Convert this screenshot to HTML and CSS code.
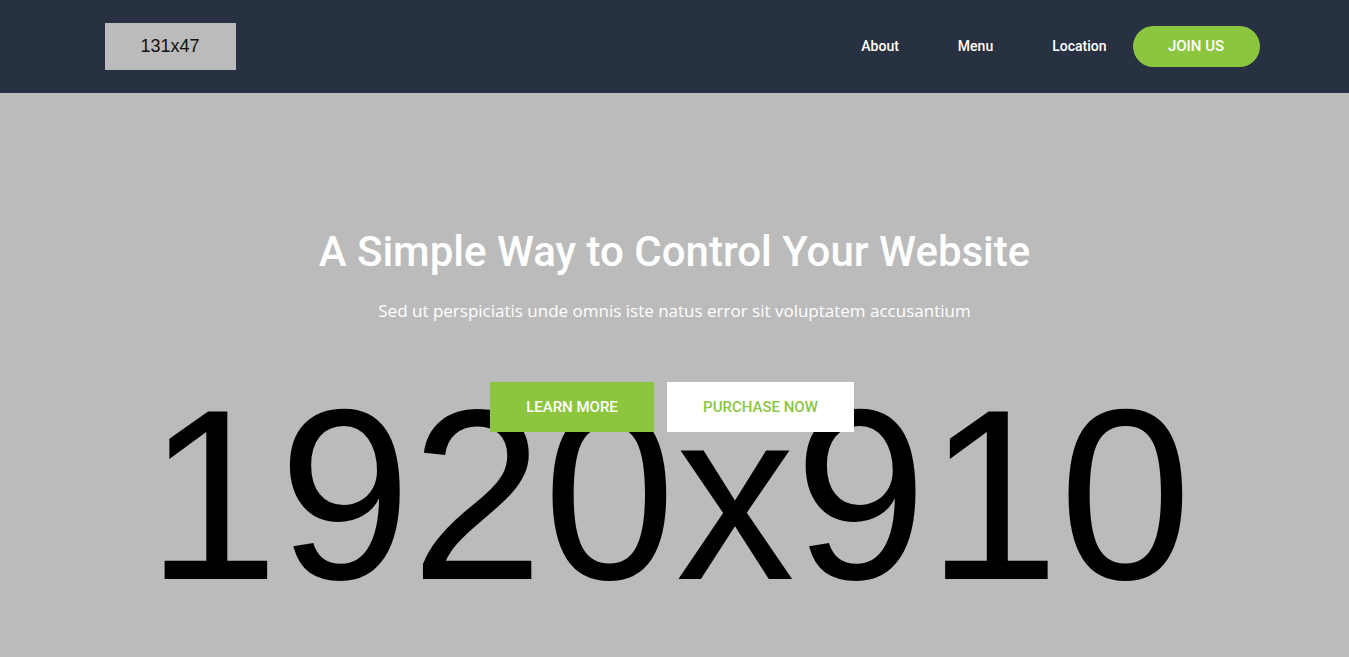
FILE: index.html
```html
<!DOCTYPE html>
<html lang="en">
<head>
<meta charset="utf-8">
<title>A Simple Way to Control Your Website</title>
<link rel="stylesheet" href="styles.css">
</head>
<body>
<header class="site-header">
  <div class="container header-inner">
    <a class="logo" href="#">131x47</a>
    <nav class="nav">
      <a class="nav-link" href="#">About</a>
      <a class="nav-link" href="#">Menu</a>
      <a class="nav-link" href="#">Location</a>
      <a class="nav-cta" href="#">JOIN US</a>
    </nav>
  </div>
</header>
<section class="hero">
  <div class="hero-bg" aria-hidden="true"><span>1920x910</span></div>
  <div class="hero-content">
    <h1 class="hero-title">A Simple Way to Control Your Website</h1>
    <p class="hero-sub">Sed ut perspiciatis unde omnis iste natus error sit voluptatem accusantium</p>
    <div class="hero-actions">
      <a class="btn btn-green" href="#">LEARN MORE</a>
      <a class="btn btn-white" href="#">PURCHASE NOW</a>
    </div>
  </div>
</section>
</body>
</html>
```
FILE: styles.css
```css
* { box-sizing: border-box; }
html, body { margin: 0; padding: 0; }
body {
  font-family: Roboto, "Liberation Sans", Arial, sans-serif;
  background: #bbbbbb;
  overflow: hidden;
}
a { text-decoration: none; }

.container {
  width: 1170px;
  margin: 0 auto;
  padding: 0 0 0 15px;
}

.site-header {
  background: #273142;
  height: 93px;
}
.header-inner {
  height: 93px;
  display: flex;
  align-items: center;
  justify-content: space-between;
}
.logo {
  width: 131px;
  height: 47px;
  background: #bbbbbb;
  color: #111;
  font-family: "Liberation Sans", Arial, sans-serif;
  font-size: 18px;
  display: flex;
  align-items: center;
  justify-content: center;
}
.nav {
  display: flex;
  align-items: center;
}
.nav-link {
  color: #fff;
  font-size: 14px;
  font-weight: 500;
  margin-left: 59px;
  padding-bottom: 2px;
}
.nav-link:first-child { margin-left: 0; }
.nav-cta {
  margin-left: 26px;
  width: 127px;
  height: 41px;
  border-radius: 21px;
  background: #8cc63f;
  color: #fff;
  font-size: 15px;
  font-weight: 500;
  display: flex;
  align-items: center;
  justify-content: center;
  padding-bottom: 2px;
}

.hero {
  position: relative;
  height: 804px;
  background: #bbbbbb;
  overflow: hidden;
}
.hero-bg {
  position: absolute;
  inset: 0;
  display: flex;
  align-items: center;
  justify-content: center;
  padding-right: 12px;
}
.hero-bg span {
  font-family: "Liberation Sans", Arial, sans-serif;
  font-size: 244px;
  color: #000;
  line-height: 1;
  transform: scaleX(0.975);
}
.hero-content {
  position: relative;
  text-align: center;
  padding-top: 130px;
}
.hero-title {
  margin: 0;
  color: #fff;
  font-size: 42px;
  font-weight: 500;
  line-height: 58px;
}
.hero-sub {
  margin: 18px 0 0;
  color: #fff;
  font-family: "Open Sans", sans-serif;
  font-size: 17px;
  line-height: 24px;
}
.hero-actions {
  margin-top: 59px;
  display: flex;
  justify-content: center;
  gap: 13px;
  padding-right: 5px;
}
.btn {
  height: 50px;
  display: flex;
  align-items: center;
  justify-content: center;
  font-size: 15px;
  font-weight: 500;
}
.btn-green { width: 164px; background: #8cc63f; color: #fff; }
.btn-white { width: 187px; background: #fff; color: #8cc63f; }
```
